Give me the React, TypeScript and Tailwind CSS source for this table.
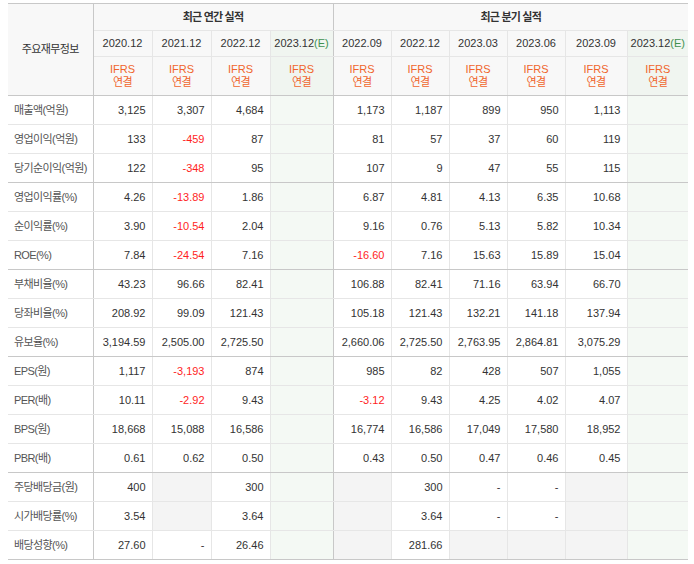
import React from 'react'

type Cell = string | null // null = empty gray cell

interface Row {
  label: string
  annual: Cell[]
  quarter: Cell[]
  groupEnd?: boolean
}

const annualHeads = ['2020.12', '2021.12', '2022.12']
const quarterHeads = ['2022.09', '2022.12', '2023.03', '2023.06', '2023.09']

const rows: Row[] = [
  { label: '매출액(억원)', annual: ['3,125', '3,307', '4,684'], quarter: ['1,173', '1,187', '899', '950', '1,113'] },
  { label: '영업이익(억원)', annual: ['133', '-459', '87'], quarter: ['81', '57', '37', '60', '119'] },
  { label: '당기순이익(억원)', annual: ['122', '-348', '95'], quarter: ['107', '9', '47', '55', '115'], groupEnd: true },
  { label: '영업이익률(%)', annual: ['4.26', '-13.89', '1.86'], quarter: ['6.87', '4.81', '4.13', '6.35', '10.68'] },
  { label: '순이익률(%)', annual: ['3.90', '-10.54', '2.04'], quarter: ['9.16', '0.76', '5.13', '5.82', '10.34'] },
  { label: 'ROE(%)', annual: ['7.84', '-24.54', '7.16'], quarter: ['-16.60', '7.16', '15.63', '15.89', '15.04'], groupEnd: true },
  { label: '부채비율(%)', annual: ['43.23', '96.66', '82.41'], quarter: ['106.88', '82.41', '71.16', '63.94', '66.70'] },
  { label: '당좌비율(%)', annual: ['208.92', '99.09', '121.43'], quarter: ['105.18', '121.43', '132.21', '141.18', '137.94'] },
  { label: '유보율(%)', annual: ['3,194.59', '2,505.00', '2,725.50'], quarter: ['2,660.06', '2,725.50', '2,763.95', '2,864.81', '3,075.29'], groupEnd: true },
  { label: 'EPS(원)', annual: ['1,117', '-3,193', '874'], quarter: ['985', '82', '428', '507', '1,055'] },
  { label: 'PER(배)', annual: ['10.11', '-2.92', '9.43'], quarter: ['-3.12', '9.43', '4.25', '4.02', '4.07'] },
  { label: 'BPS(원)', annual: ['18,668', '15,088', '16,586'], quarter: ['16,774', '16,586', '17,049', '17,580', '18,952'] },
  { label: 'PBR(배)', annual: ['0.61', '0.62', '0.50'], quarter: ['0.43', '0.50', '0.47', '0.46', '0.45'], groupEnd: true },
  { label: '주당배당금(원)', annual: ['400', null, '300'], quarter: [null, '300', '-', '-', null] },
  { label: '시가배당률(%)', annual: ['3.54', null, '3.64'], quarter: [null, '3.64', '-', '-', null] },
  { label: '배당성향(%)', annual: ['27.60', '-', '26.46'], quarter: [null, '281.66', null, null, null] },
]

const font = "font-['Liberation_Sans','Noto_Sans_CJK_KR',sans-serif]"

function NumCell({ value, rowBorder }: { value: Cell; rowBorder: string }) {
  const neg = value !== null && value.startsWith('-') && value.length > 1
  const bg = value === null ? 'bg-[#f4f4f4]' : 'bg-white'
  return (
    <td
      className={`h-[29px] p-0 pr-[6px] text-right border-b border-r border-r-[#e6e6e6] ${rowBorder} ${bg} ${neg ? 'text-[#ff1e1e]' : 'text-[#333]'}`}
    >
      {value}
    </td>
  )
}

function EstCell({ rowBorder, last }: { rowBorder: string; last?: boolean }) {
  return (
    <td
      className={`h-[29px] p-0 border-b ${rowBorder} bg-[#f4f9f4] ${last ? '' : 'border-r border-r-[#c8c8c8]'}`}
    />
  )
}

function HeadDate({ text }: { text: string }) {
  return (
    <th className="h-[26px] p-0 font-normal text-[#333] border-b border-r border-[#e6e6e6] bg-[#f8f8f8]">
      {text}
    </th>
  )
}

function HeadIfrs({ est, darkRight, last }: { est?: boolean; darkRight?: boolean; last?: boolean }) {
  return (
    <th
      className={`h-[39px] p-0 font-normal text-[#f0652c] leading-[13px] border-b border-b-[#c8c8c8] ${last ? '' : 'border-r'} ${darkRight ? 'border-r-[#c8c8c8]' : 'border-r-[#e6e6e6]'} ${est ? 'bg-[#f0f5f0]' : 'bg-[#f8f8f8]'}`}
    >
      IFRS
      <br />
      <span className="tracking-[-0.6px]">연결</span>
    </th>
  )
}

export default function App() {
  return (
    <div className={`pl-[8px] pt-[3px] bg-white ${font} text-[11px]`}>
      <table className="w-[680px] table-fixed border-collapse border-t border-t-[#c8c8c8]">
        <colgroup>
          <col className="w-[85px]" />
          <col className="w-[59px]" />
          <col className="w-[59px]" />
          <col className="w-[59px]" />
          <col className="w-[63px]" />
          <col className="w-[58px]" />
          <col className="w-[58px]" />
          <col className="w-[58px]" />
          <col className="w-[58px]" />
          <col className="w-[62px]" />
          <col className="w-[61px]" />
        </colgroup>
        <thead>
          <tr>
            <th
              rowSpan={3}
              className="p-0 bg-[#f8f8f8] font-normal text-[#333] tracking-[-0.6px] border-b border-r border-b-[#c8c8c8] border-r-[#c8c8c8]"
            >
              주요재무정보
            </th>
            <th
              colSpan={4}
              className="h-[27px] p-0 bg-[#f8f8f8] font-bold text-[#333] tracking-[-0.8px] border-b border-r border-b-[#e6e6e6] border-r-[#c8c8c8]"
            >
              최근 연간 실적
            </th>
            <th
              colSpan={6}
              className="h-[27px] p-0 bg-[#f8f8f8] font-bold text-[#333] tracking-[-0.8px] border-b border-b-[#e6e6e6]"
            >
              최근 분기 실적
            </th>
          </tr>
          <tr>
            {annualHeads.map((h) => (
              <HeadDate key={'a' + h} text={h} />
            ))}
            <th className="h-[26px] p-0 font-normal text-[#333] border-b border-r border-b-[#e6e6e6] border-r-[#c8c8c8] bg-[#f0f5f0]">
              2023.12<span className="text-[#3f9150]">(E)</span>
            </th>
            {quarterHeads.map((h) => (
              <HeadDate key={'q' + h} text={h} />
            ))}
            <th className="h-[26px] p-0 font-normal text-[#333] border-b border-b-[#e6e6e6] bg-[#f0f5f0]">
              2023.12<span className="text-[#3f9150]">(E)</span>
            </th>
          </tr>
          <tr>
            <HeadIfrs />
            <HeadIfrs />
            <HeadIfrs />
            <HeadIfrs est darkRight />
            <HeadIfrs />
            <HeadIfrs />
            <HeadIfrs />
            <HeadIfrs />
            <HeadIfrs />
            <HeadIfrs est last />
          </tr>
        </thead>
        <tbody>
          {rows.map((row, i) => {
            const rowBorder = row.groupEnd || i === rows.length - 1 ? 'border-b-[#c8c8c8]' : 'border-b-[#e6e6e6]'
            return (
              <tr key={row.label}>
                <td
                  className={`h-[29px] p-0 pl-[6px] text-left text-[#555] tracking-[-0.6px] bg-white border-b border-r border-r-[#c8c8c8] ${rowBorder}`}
                >
                  {row.label}
                </td>
                {row.annual.map((v, j) => (
                  <NumCell key={'a' + j} value={v} rowBorder={rowBorder} />
                ))}
                <EstCell rowBorder={rowBorder} />
                {row.quarter.map((v, j) => (
                  <NumCell key={'q' + j} value={v} rowBorder={rowBorder} />
                ))}
                <EstCell rowBorder={rowBorder} last />
              </tr>
            )
          })}
        </tbody>
      </table>
    </div>
  )
}
